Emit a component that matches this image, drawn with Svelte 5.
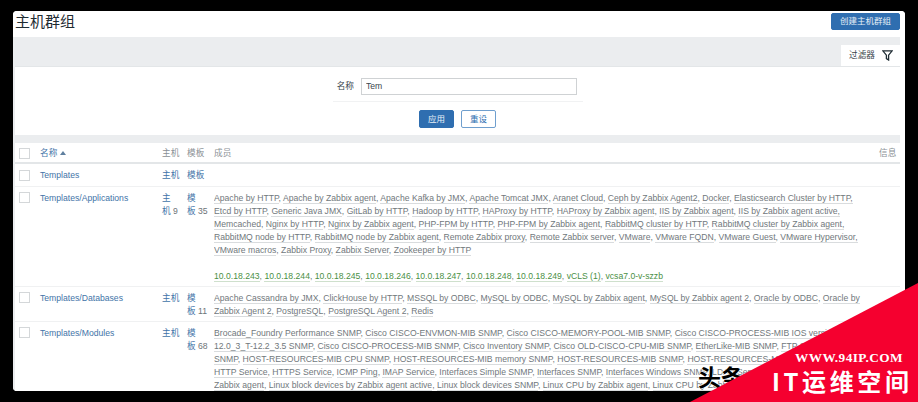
<script>
  const apps = [
    ['Apache by HTTP','Apache by Zabbix agent','Apache Kafka by JMX','Apache Tomcat JMX','Aranet Cloud','Ceph by Zabbix Agent2','Docker','Elasticsearch Cluster by HTTP,'],
    ['Etcd by HTTP','Generic Java JMX','GitLab by HTTP','Hadoop by HTTP','HAProxy by HTTP','HAProxy by Zabbix agent','IIS by Zabbix agent','IIS by Zabbix agent active,'],
    ['Memcached','Nginx by HTTP','Nginx by Zabbix agent','PHP-FPM by HTTP','PHP-FPM by Zabbix agent','RabbitMQ cluster by HTTP','RabbitMQ cluster by Zabbix agent,'],
    ['RabbitMQ node by HTTP','RabbitMQ node by Zabbix agent','Remote Zabbix proxy','Remote Zabbix server','VMware','VMware FQDN','VMware Guest','VMware Hypervisor,'],
    ['VMware macros','Zabbix Proxy','Zabbix Server','Zookeeper by HTTP']
  ];
  const hosts = ['10.0.18.243','10.0.18.244','10.0.18.245','10.0.18.246','10.0.18.247','10.0.18.248','10.0.18.249','vCLS (1)','vcsa7.0-v-szzb'];
  const dbs = [
    ['Apache Cassandra by JMX','ClickHouse by HTTP','MSSQL by ODBC','MySQL by ODBC','MySQL by Zabbix agent','MySQL by Zabbix agent 2','Oracle by ODBC','Oracle by'],
    ['Zabbix Agent 2','PostgreSQL','PostgreSQL Agent 2','Redis']
  ];
  const mods = [
    ['Brocade_Foundry Performance SNMP','Cisco CISCO-ENVMON-MIB SNMP','Cisco CISCO-MEMORY-POOL-MIB SNMP','Cisco CISCO-PROCESS-MIB IOS versions'],
    ['12.0_3_T-12.2_3.5 SNMP','Cisco CISCO-PROCESS-MIB SNMP','Cisco Inventory SNMP','Cisco OLD-CISCO-CPU-MIB SNMP','EtherLike-MIB SNMP','FTP Service'],
    ['SNMP','HOST-RESOURCES-MIB CPU SNMP','HOST-RESOURCES-MIB memory SNMP','HOST-RESOURCES-MIB SNMP','HOST-RESOURCES-MIB storage SNMP'],
    ['HTTP Service','HTTPS Service','ICMP Ping','IMAP Service','Interfaces Simple SNMP','Interfaces SNMP','Interfaces Windows SNMP','LDAP Service'],
    ['Zabbix agent','Linux block devices by Zabbix agent active','Linux block devices SNMP','Linux CPU by Zabbix agent','Linux CPU by Zabbix']
  ];
</script>

{#snippet links(lines, cls)}
  {#each lines as line}
    <div class="line">
      {#each line as item, i}
        <span class={cls}>{item}</span>{i < line.length - 1 ? ', ' : ''}
      {/each}
    </div>
  {/each}
{/snippet}

<div class="screen">
  <div class="window">
    <header class="head">
      <h1>主机群组</h1>
      <button class="create">创建主机群组</button>
    </header>
    <main class="page">
      <div class="tabbar">
        <div class="tab">
          <span>过滤器</span>
          <svg width="11" height="11" viewBox="0 0 11 11"><path d="M.8 .8h9.4L6.6 5.2V10L4.4 8.6V5.2z" fill="none" stroke="#1f2c33" stroke-width="1.3"/></svg>
        </div>
      </div>
      <section class="filter">
        <div class="field">
          <label for="nm">名称</label>
          <input id="nm" value="Tem" />
        </div>
        <div class="actions">
          <button class="apply">应用</button>
          <button class="reset">重设</button>
        </div>
      </section>
      <section class="table">
        <div class="row th">
          <div class="c1"><i class="box"></i></div>
          <div class="c2 blue">名称 <b class="sort"></b></div>
          <div class="c3">主机</div>
          <div class="c4">模板</div>
          <div class="c5">成员</div>
          <div class="c6">信息</div>
        </div>
        <div class="row r1">
          <div class="c1"><i class="box"></i></div>
          <div class="c2 blue">Templates</div>
          <div class="c3 blue">主机</div>
          <div class="c4 blue">模板</div>
          <div class="c5"></div>
        </div>
        <div class="row r2">
          <div class="c1"><i class="box"></i></div>
          <div class="c2 blue">Templates/Applications</div>
          <div class="c3"><span class="blue">主<br />机</span> <span class="num">9</span></div>
          <div class="c4"><span class="blue">模<br />板</span> <span class="num">35</span></div>
          <div class="c5">
            {@render links(apps, 'm')}
            <div class="line"></div>
            {@render links([hosts], 'g')}
          </div>
        </div>
        <div class="row r3">
          <div class="c1"><i class="box"></i></div>
          <div class="c2 blue">Templates/Databases</div>
          <div class="c3 blue">主机</div>
          <div class="c4"><span class="blue">模<br />板</span> <span class="num">11</span></div>
          <div class="c5">{@render links(dbs, 'm')}</div>
        </div>
        <div class="row r4">
          <div class="c1"><i class="box"></i></div>
          <div class="c2 blue">Templates/Modules</div>
          <div class="c3 blue">主机</div>
          <div class="c4"><span class="blue">模<br />板</span> <span class="num">68</span></div>
          <div class="c5">{@render links(mods, 'm')}</div>
        </div>
      </section>
    </main>
  </div>
  <div class="toutiao">头条</div>
  <div class="ribbon">
    <div class="url">WWW.94IP.COM</div>
    <div class="brand">IT运维空间</div>
  </div>
</div>

<style>
  :global(body) { margin: 0; background: #000; }
  .screen {
    position: relative;
    width: 918px;
    height: 402px;
    box-sizing: border-box;
    padding: 11px 13px 11px 13px;
    background: #000;
    overflow: hidden;
    font: 8.65px/13px "Liberation Sans", "Noto Sans CJK SC", sans-serif;
    color: #71787c;
  }
  .window {
    height: 380px;
    background: #fff;
    border-radius: 4px;
    overflow: hidden;
  }
  .head {
    height: 26px;
    background: #fff;
    display: flex;
    justify-content: space-between;
    padding: 2px 5px 0 2px;
    box-sizing: border-box;
  }
  h1 {
    margin: 0;
    font-size: 15px;
    line-height: 18px;
    font-weight: 400;
    color: #1f2c33;
  }
  button {
    font: inherit;
    font-size: 8.5px;
    border-radius: 2px;
    padding: 0;
    box-sizing: border-box;
  }
  .create {
    width: 69px;
    height: 17px;
    background: #2f6eb0;
    border: 1px solid #2f6eb0;
    color: #e8f0f7;
  }
  .page {
    padding: 8px 0 0 2px;
    margin-right: 5px;
    height: 354px;
    box-sizing: border-box;
    background: #ebedef;
  }
  .tabbar { display: flex; justify-content: flex-end; height: 21px; }
  .tab {
    width: 59px;
    background: #fff;
    display: flex;
    align-items: center;
    gap: 7px;
    padding-left: 8px;
    box-sizing: border-box;
    color: #3a464d;
  }
  .filter {
    height: 69px;
    background: #fff;
    box-sizing: border-box;
    border-top: 1px solid #e3e6e8;
    padding-top: 11px;
  }
  .field {
    margin-left: 318px;
    display: flex;
    align-items: center;
    gap: 7px;
    height: 24px;
    padding-bottom: 7px;
    box-sizing: border-box;
    justify-content: flex-end;
    border-bottom: 1px solid #f1f2f3;
    color: #3a464d;
    width: 250px;
    padding-right: 6px;
  }
  input {
    width: 216px;
    height: 17px;
    box-sizing: border-box;
    border: 1px solid #cfd2d4;
    padding: 0 4px;
    font: inherit;
    color: #3a464d;
    background: #fff;
    outline: none;
  }
  .actions {
    display: flex;
    gap: 7px;
    margin-top: 8px;
    margin-left: 404px;
  }
  .actions button { width: 35px; height: 18px; }
  .apply { background: #2f6eb0; border: 1px solid #2f6eb0; color: #e8f0f7; }
  .reset { background: #fff; border: 1px solid #6f9fce; color: #2f6eb0; }
  .table { margin-top: 8px; background: #fff; height: 260px; overflow: hidden; }
  .row {
    display: flex;
    box-sizing: border-box;
    border-bottom: 1px solid #f0f1f2;
  }
  .th { height: 21px; border-bottom: 2px solid #e3e6e8; align-items: center; padding-top: 1px; }
  .r1 { height: 23px; align-items: center; padding-top: 1px; }
  .r2 { height: 100px; padding-top: 5px; }
  .r3 { height: 35px; padding-top: 5px; }
  .r4 { padding-top: 5px; }
  .c1 { width: 25px; flex: none; padding-left: 4px; box-sizing: border-box; }
  .c2 { width: 122px; flex: none; }
  .c3 { width: 25px; flex: none; }
  .c4 { width: 27px; flex: none; }
  .c5 { flex: 1; min-width: 0; }
  .c6 { width: 21px; flex: none; }
  .box {
    display: block;
    width: 11px;
    height: 11px;
    border: 1px solid #d4d7d9;
    background: #fff;
    box-sizing: border-box;
  }
  .blue { color: #3f74a8; }
  .sort {
    display: inline-block;
    border: 3px solid transparent;
    border-top: 0;
    border-bottom: 4px solid #5f7f9f;
    vertical-align: 1px;
  }
  .th .c3, .th .c4, .th .c5, .th .c6 { color: #8a9095; }
  .num { color: #6d7478; }
  .line { white-space: nowrap; height: 13px; overflow: hidden; }
  .m { border-bottom: 1px solid #d9dcde; }
  .g { color: #4a8f45; border-bottom: 1px solid #cfe0cd; }
  .toutiao {
    position: absolute;
    left: 698px;
    top: 364px;
    font-size: 23px;
    line-height: 28px;
    font-weight: 700;
    color: #000;
    -webkit-text-stroke: 1px #fff;
    paint-order: stroke;
  }
  .ribbon {
    position: absolute;
    inset: 0;
    background: #f5002f;
    clip-path: polygon(690px 402px, 918px 283px, 918px 402px);
    color: #fff;
  }
  .url {
    position: absolute;
    left: 795px;
    top: 350px;
    font: 700 13.3px/15px "Liberation Serif", serif;
    letter-spacing: 0.4px;
  }
  .brand {
    position: absolute;
    left: 772px;
    top: 366px;
    font: 700 24px/30px "Noto Sans CJK SC", sans-serif;
    letter-spacing: 3.6px;
    white-space: nowrap;
  }
</style>
